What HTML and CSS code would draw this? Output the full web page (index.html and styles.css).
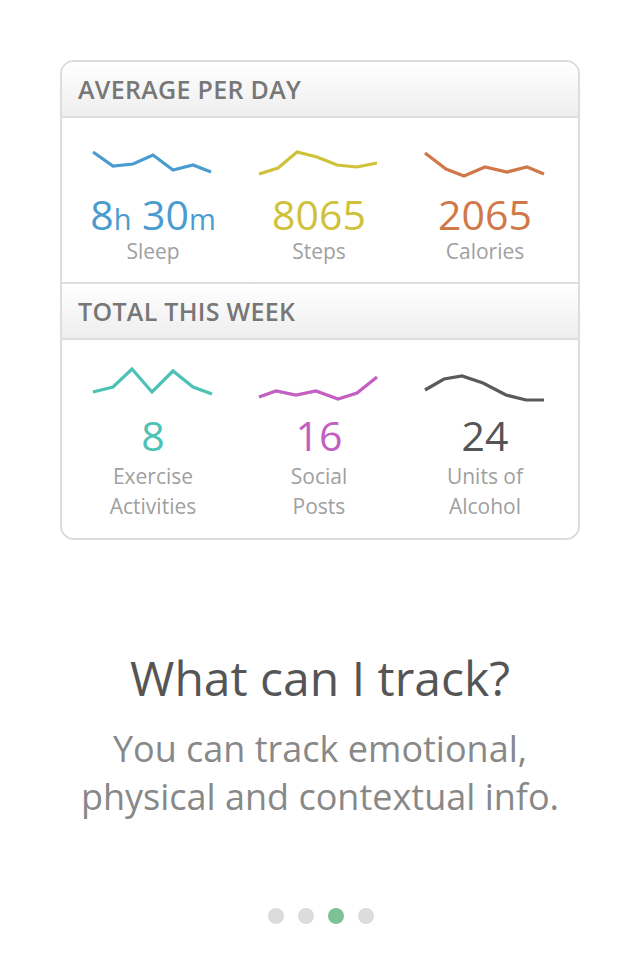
FILE: index.html
```html
<!DOCTYPE html>
<html>
<head>
<meta charset="utf-8">
<link rel="stylesheet" href="styles.css">
</head>
<body>
<div class="screen">
  <div class="card">
    <div class="card-head">AVERAGE PER DAY</div>
    <div class="card-body first">
      <div class="stat">
        <svg class="spark" width="124" height="32" viewBox="0 0 124 32"><polyline points="2,3 22,17 42,15 62,6 82,21 102,16 120,23" stroke="#4a9ccf"/></svg>
        <div class="value blue">8<span class="unit">h</span> 30<span class="unit">m</span></div>
        <div class="label">Sleep</div>
      </div>
      <div class="stat">
        <svg class="spark" width="124" height="32" viewBox="0 0 124 32"><polyline points="2,25 21,19 40,3 60,8 80,16 100,18 120,14" stroke="#cfc23a"/></svg>
        <div class="value yellow">8065</div>
        <div class="label">Steps</div>
      </div>
      <div class="stat">
        <svg class="spark" width="124" height="32" viewBox="0 0 124 32"><polyline points="2,4 23,20 41,27 62,18 84,23 104,18 121,25" stroke="#d0784a"/></svg>
        <div class="value orange">2065</div>
        <div class="label">Calories</div>
      </div>
    </div>
    <div class="card-head">TOTAL THIS WEEK</div>
    <div class="card-body second">
      <div class="stat">
        <svg class="spark" width="124" height="32" viewBox="0 0 124 32"><polyline points="2,24 22,19 41,1 61,24 82,3 102,19 121,26" stroke="#4cc1b5"/></svg>
        <div class="value teal">8</div>
        <div class="label">Exercise<br>Activities</div>
      </div>
      <div class="stat">
        <svg class="spark" width="124" height="32" viewBox="0 0 124 32"><polyline points="2,29 19,23 39,27 59,23 81,31 100,25 120,9" stroke="#c35ec2"/></svg>
        <div class="value purple">16</div>
        <div class="label">Social<br>Posts</div>
      </div>
      <div class="stat">
        <svg class="spark" width="124" height="32" viewBox="0 0 124 32"><polyline points="2,22 21,11 39,8 60,15 83,27 103,32 121,32" stroke="#5a5a5a"/></svg>
        <div class="value dark">24</div>
        <div class="label">Units of<br>Alcohol</div>
      </div>
    </div>
  </div>

  <div class="intro">
    <h1 class="title">What can I track?</h1>
    <p class="subtitle">You can track emotional,<br>physical and contextual info.</p>
  </div>

  <div class="dots">
    <span class="dot"></span>
    <span class="dot"></span>
    <span class="dot active"></span>
    <span class="dot"></span>
  </div>
</div>
</body>
</html>
```

FILE: styles.css
```css
* { box-sizing: border-box; }
html, body {
  margin: 0;
  padding: 0;
  background: #ffffff;
}
body {
  font-family: "Open Sans", "Noto Sans", sans-serif;
  width: 640px;
  height: 960px;
  overflow: hidden;
}
.screen {
  display: flex;
  flex-direction: column;
  align-items: center;
  padding-top: 60px;
}
.card {
  width: 520px;
  border: 2px solid #dddddd;
  border-radius: 14px;
  overflow: hidden;
  background: #fff;
}
.card-head {
  height: 56px;
  padding-left: 16px;
  display: flex;
  align-items: center;
  background: linear-gradient(to bottom, #ffffff 0%, #eeeeee 100%);
  border-bottom: 2px solid #dedede;
  color: #777777;
  font-size: 25px;
  font-weight: 600;
  letter-spacing: 0.3px;
}
.card-body {
  display: grid;
  grid-template-columns: repeat(3, 166px);
  padding-left: 8px;
}
.card-body.first {
  height: 166px;
  padding-top: 31px;
  border-bottom: 2px solid #dedede;
}
.card-body.second {
  height: 198px;
  padding-top: 28px;
}
.spark {
  display: block;
  overflow: visible;
}
.stat {
  display: flex;
  flex-direction: column;
  align-items: center;
}
.spark polyline {
  fill: none;
  stroke-width: 3.2;
  stroke-linejoin: miter;
  stroke-linecap: butt;
}
.value {
  font-size: 41px;
  line-height: 44px;
  margin-top: 13px;
}
.unit {
  font-size: 29px;
  line-height: 0;
}
.blue { color: #4a9ccf; }
.yellow { color: #cfc23a; }
.orange { color: #d0784a; }
.teal { color: #4cc1b5; }
.purple { color: #c35ec2; }
.dark { color: #555555; }
.label {
  font-size: 21px;
  line-height: 30px;
  color: #a0a0a0;
  text-align: center;
}
.first .value { margin-top: 11px; }
.second .label { margin-top: 4px; }
.intro {
  margin-top: 108px;
  text-align: center;
}
.title {
  margin: 0;
  font-size: 48px;
  font-weight: 400;
  line-height: 60px;
  color: #555555;
}
.subtitle {
  margin: 17px 0 0;
  font-size: 36px;
  line-height: 48px;
  color: #888888;
}
.dots {
  margin-top: 87px;
  display: flex;
  gap: 14px;
  padding-left: 2px;
}
.dot {
  width: 16px;
  height: 16px;
  border-radius: 50%;
  background: #dcdcdc;
}
.dot.active { background: #7dc195; }
```
